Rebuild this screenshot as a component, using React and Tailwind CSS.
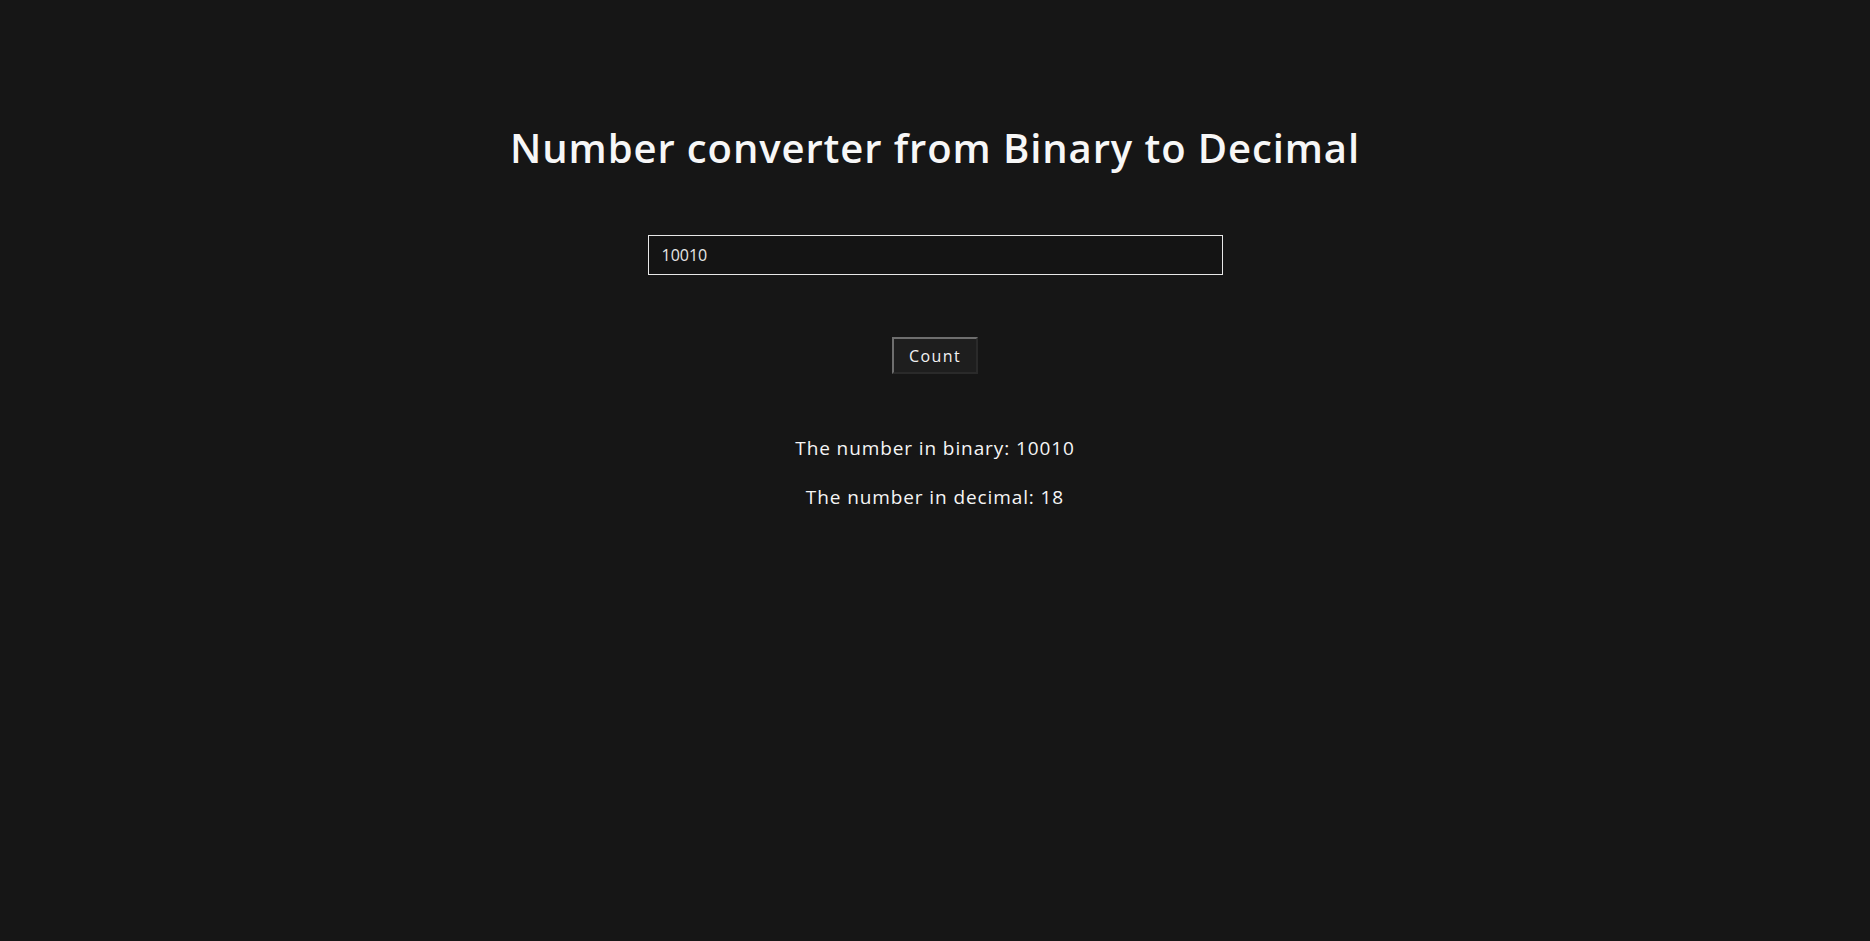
import React, { useState } from 'react';

const toDecimal = (bin) => {
  if (!/^[01]+$/.test(bin)) return '';
  return parseInt(bin, 2).toString();
};

export default function App() {
  const [value, setValue] = useState('10010');
  const [binary, setBinary] = useState('10010');

  const handleCount = () => setBinary(value);

  return (
    <div className="min-h-screen w-full bg-[#161616] text-white flex flex-col items-center font-['Open_Sans',sans-serif]">
      <h1 className="mt-[128px] text-[40px] leading-[40px] font-semibold tracking-[0.9px] text-[#f7f7f7]">
        Number converter from Binary to Decimal
      </h1>

      <input
        type="text"
        value={value}
        onChange={(e) => setValue(e.target.value)}
        className="mt-[67px] w-[575px] h-[40px] border border-[#e8e8e8] bg-[#141414] px-[13px] text-[16px] text-[#e6e6e6] outline-none"
      />

      <button
        onClick={handleCount}
        className="mt-[62px] w-[86px] h-[37px] bg-[#1e1e1e] text-[16px] tracking-[1.4px] text-[#f2f2f2] border-2 border-t-[#6e6e6e] border-l-[#6e6e6e] border-r-[#2a2a2a] border-b-[#2a2a2a]"
      >
        Count
      </button>

      <p className="mt-[62px] text-[19px] leading-[24px] tracking-[0.9px] text-[#f5f5f5]">
        The number in binary: {binary}
      </p>
      <p className="mt-[25px] text-[19px] leading-[24px] tracking-[0.9px] text-[#f5f5f5]">
        The number in decimal: {toDecimal(binary)}
      </p>
    </div>
  );
}
